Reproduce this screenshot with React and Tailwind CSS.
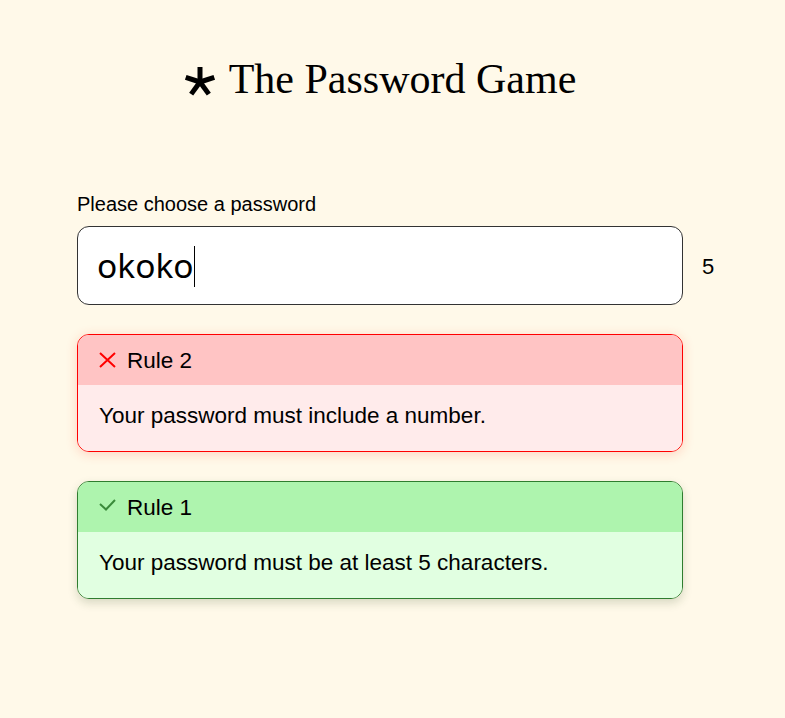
import React from "react";

function Asterisk() {
  const cx = 16, cy = 16, r = 15;
  const angles = [-90, -18, 54, 126, 198];
  return (
    <svg width="32" height="32" viewBox="0 0 32 32" className="block">
      {angles.map((a) => {
        const rad = (a * Math.PI) / 180;
        return (
          <line
            key={a}
            x1={cx}
            y1={cy}
            x2={cx + r * Math.cos(rad)}
            y2={cy + r * Math.sin(rad)}
            stroke="#000"
            strokeWidth="5"
            strokeLinecap="butt"
          />
        );
      })}
    </svg>
  );
}

function XIcon() {
  return (
    <svg width="17" height="16" viewBox="0 0 17 16" className="block">
      <path d="M1 1 L16 15 M16 1 L1 15" stroke="#ff0000" strokeWidth="2" fill="none" />
    </svg>
  );
}

function CheckIcon() {
  return (
    <svg width="17" height="12" viewBox="0 0 17 12" className="block">
      <path d="M1 5 L7 10.5 L16 1" stroke="#3a8a3a" strokeWidth="2" fill="none" />
    </svg>
  );
}

function Rule({ ok, n, text }) {
  const box = ok
    ? "border-[#2f7d2f] shadow-[0_4px_10px_rgba(40,70,20,0.18)]"
    : "border-[#ff0000] shadow-[0_2px_12px_rgba(255,60,30,0.2)]";
  const head = ok ? "bg-[#aef4ae]" : "bg-[#ffc4c4]";
  const body = ok ? "bg-[#e1ffe1]" : "bg-[#ffebeb]";
  return (
    <div className={`w-[606px] rounded-[12px] border overflow-hidden ${box}`}>
      <div className={`h-[50px] flex items-center pl-[21px] ${head}`}>
        <div className={`w-[17px] flex justify-start ${ok ? "-mt-[4px]" : "mt-0"}`}>
          {ok ? <CheckIcon /> : <XIcon />}
        </div>
        <span className="ml-[11px] mt-[3px] text-[22.5px] leading-none text-black">Rule {n}</span>
      </div>
      <div className={`h-[66px] flex items-center pl-[21px] ${body}`}>
        <span className="-mt-[3px] text-[22.5px] leading-none text-black">{text}</span>
      </div>
    </div>
  );
}

export default function App() {
  return (
    <div
      className="min-h-[718px] w-full bg-[#fff9e9]"
      style={{ fontFamily: '"Liberation Sans", Arial, sans-serif' }}
    >
      <div className="pl-[77px] pt-[55px]">
        <div className="w-[606px] flex justify-center items-center">
          <div className="flex items-center gap-[13px]">
            <div className="mt-[6px]">
              <Asterisk />
            </div>
            <h1
              className="text-[42px] leading-[48px] text-black font-normal"
              style={{ fontFamily: '"Liberation Serif", "Times New Roman", serif' }}
            >
              The Password Game
            </h1>
          </div>
        </div>

        <div className="mt-[90px] text-[20px] leading-[22px] text-black">Please choose a password</div>

        <div className="mt-[11px] flex items-center">
          <div className="w-[606px] h-[79px] rounded-[12px] border border-[#333] bg-white flex items-center pl-[19px]">
            <span
              className="text-[33.5px] text-black"
              style={{ fontFamily: '"Noto Sans", "Open Sans", sans-serif' }}
            >
              okoko
            </span>
            <span className="inline-block w-px h-[41px] bg-black mt-[2px]"></span>
          </div>
          <span className="ml-[19px] mt-[2px] text-[22px] text-black">5</span>
        </div>

        <div className="mt-[29px] flex flex-col gap-[29px]">
          <Rule ok={false} n={2} text="Your password must include a number." />
          <Rule ok={true} n={1} text="Your password must be at least 5 characters." />
        </div>
      </div>
    </div>
  );
}
